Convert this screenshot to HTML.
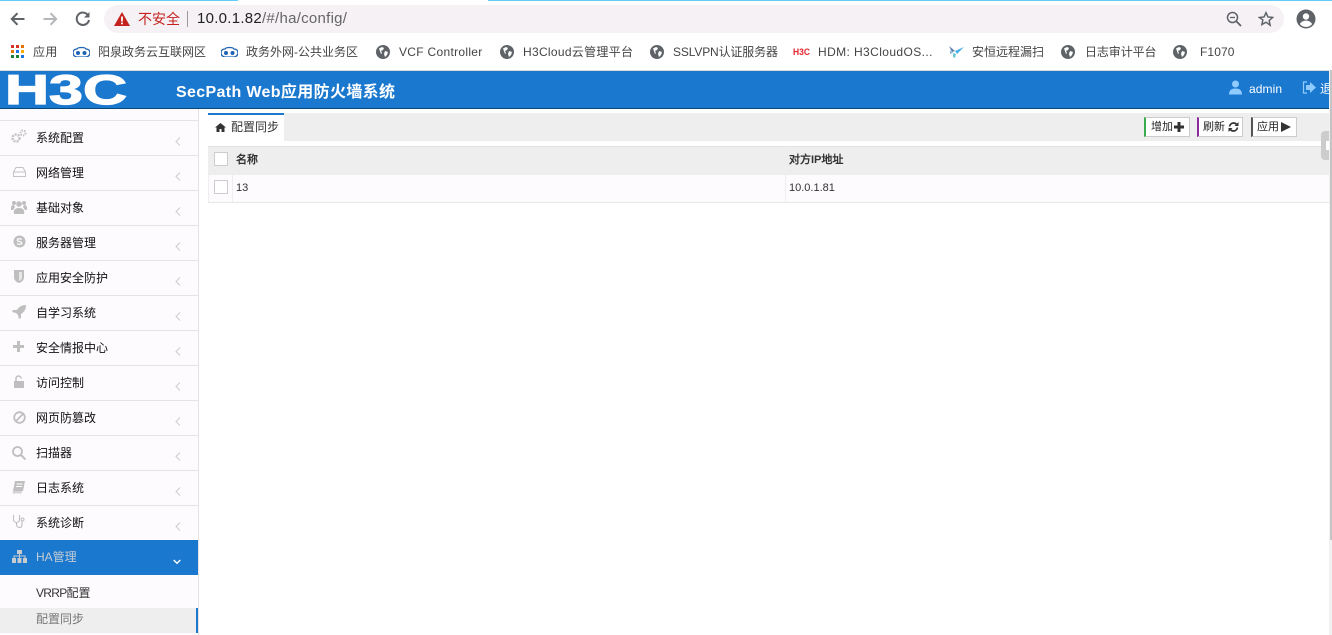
<!DOCTYPE html>
<html lang="zh-CN"><head><meta charset="utf-8"><title>配置同步</title>
<style>
html,body{margin:0;padding:0;width:1332px;height:635px;overflow:hidden;background:#fff}
body{position:relative;font-family:"Liberation Sans","WenQuanYi Zen Hei",sans-serif;font-size:12px;color:#222}
.a{position:absolute;white-space:nowrap}
.bm{position:absolute;top:44px;height:16px;line-height:16px;font-family:"Liberation Sans","Noto Sans CJK SC",sans-serif;font-size:12px;color:#444;white-space:nowrap}
.ic{position:absolute}
.mi{position:absolute;left:0;width:198px;height:34px;border-top:1px solid #e5e3e5;background:#fefbfe}
.mi span{position:absolute;left:36px;top:9px;line-height:16px;color:#111}
.mi svg.i{position:absolute;left:10px;top:8px}
.mi svg.c{position:absolute;left:175px;top:16px}
.btn{position:absolute;top:117px;height:18px;background:#fff;border:1px solid #ccc;line-height:18px;font-size:11px;color:#222;box-sizing:content-box}
.btn span{position:absolute;left:5px;top:0}
.btn svg{position:absolute;top:4px}
.cb{position:absolute;left:214px;width:12px;height:12px;background:#fff;border:1px solid #ccc}
</style></head><body>

<!-- top strip -->
<div class="a" style="left:0;top:0;width:238px;height:1px;background:#5fcdf5"></div>
<div class="a" style="left:488px;top:0;width:844px;height:1px;background:#5fcdf5"></div>

<!-- nav buttons -->
<svg class="ic" style="left:9px;top:10px" width="18" height="18" viewBox="0 0 18 18"><path d="M15.5 9H3M8.5 3.2L2.8 9l5.700 5.800" fill="none" stroke="#5f6368" stroke-width="2"/></svg>
<svg class="ic" style="left:41px;top:10px" width="18" height="18" viewBox="0 0 18 18"><path d="M2.5 9H15M9.5 3.2L15.2 9l-5.700 5.800" fill="none" stroke="#b5b7ba" stroke-width="2"/></svg>
<svg class="ic" style="left:74px;top:10px" width="18" height="18" viewBox="0 0 18 18"><path d="M14 5.200A6.200 6.200 0 1 0 15 10" fill="none" stroke="#5f6368" stroke-width="2"/><path d="M15.500 2v5.500H10z" fill="#5f6368"/></svg>

<!-- omnibox -->
<div class="a" style="left:104px;top:5px;width:1180px;height:28px;border-radius:14px;background:#f5f1f5"></div>
<svg class="ic" style="left:114px;top:12px" width="16" height="14" viewBox="0 0 16 14"><path d="M8 0l8 14H0z" fill="#c5221f"/><rect x="7.100" y="4.500" width="1.800" height="5" fill="#fff"/><rect x="7.100" y="10.500" width="1.800" height="1.800" fill="#fff"/></svg>
<div class="a" style="left:138px;top:11px;line-height:16px;font-size:14px;color:#c5221f;font-family:'Liberation Sans','Noto Sans CJK SC',sans-serif">不安全</div>
<div class="a" style="left:187px;top:11px;width:1px;height:16px;background:#9a9a9a"></div>
<div class="a" style="left:197px;top:10px;line-height:18px;font-size:15px;letter-spacing:.27px;color:#222;font-family:'Liberation Sans',sans-serif">10.0.1.82<span style="color:#666">/#/ha/config/</span></div>
<svg class="ic" style="left:1226px;top:11px" width="16" height="16" viewBox="0 0 16 16"><circle cx="6.500" cy="6.500" r="5" fill="none" stroke="#5f6368" stroke-width="1.500"/><path d="M10.300 10.300L15 15" stroke="#5f6368" stroke-width="1.800"/><path d="M4 6.500h5" stroke="#5f6368" stroke-width="1.300"/></svg>
<svg class="ic" style="left:1258px;top:11px" width="16" height="16" viewBox="0 0 24 24"><path d="M12 2.500l2.900 6.400 7 .8-5.200 4.700 1.500 6.900L12 16.800l-6.200 3.500 1.500-6.900L2.100 9.700l7-.8z" fill="none" stroke="#5f6368" stroke-width="2.200"/></svg>
<svg class="ic" style="left:1296px;top:9px" width="20" height="20" viewBox="0 0 20 20"><circle cx="10" cy="10" r="9.500" fill="#5f6368"/><circle cx="10" cy="7.500" r="3.200" fill="#fff"/><path d="M3.800 15c1.400-2.400 3.800-3.400 6.200-3.400s4.800 1 6.200 3.400c-1.500 1.900-3.700 3-6.200 3s-4.700-1.100-6.200-3z" fill="#fff"/></svg>

<!-- bookmarks -->
<svg class="ic" style="left:11px;top:45px" width="13" height="13" viewBox="0 0 13 13">
<rect x="0" y="0" width="3" height="3" fill="#d93025"/><rect x="5" y="0" width="3" height="3" fill="#d93025"/><rect x="10" y="0" width="3" height="3" fill="#e37400"/>
<rect x="0" y="5" width="3" height="3" fill="#e37400"/><rect x="5" y="5" width="3" height="3" fill="#1a73e8"/><rect x="10" y="5" width="3" height="3" fill="#f9ab00"/>
<rect x="0" y="10" width="3" height="3" fill="#188038"/><rect x="5" y="10" width="3" height="3" fill="#188038"/><rect x="10" y="10" width="3" height="3" fill="#1a73e8"/></svg>
<div class="bm" style="left:33px;letter-spacing:.4px">应用</div>
<svg class="ic" style="left:73px;top:46px" width="17" height="11" viewBox="0 0 17 11"><path d="M4 3c1-2 8-2 9 0 3 0 4 2 4 4s-2 4-4 4H4c-2 0-4-2-4-4s1-4 4-4z" fill="none" stroke="#1f63b5" stroke-width="1.300"/><circle cx="5" cy="7" r="2" fill="#1f63b5"/><circle cx="11.500" cy="7" r="2" fill="#1f63b5"/></svg>
<div class="bm" style="left:98px">阳泉政务云互联网区</div>
<svg class="ic" style="left:221px;top:46px" width="17" height="11" viewBox="0 0 17 11"><path d="M4 3c1-2 8-2 9 0 3 0 4 2 4 4s-2 4-4 4H4c-2 0-4-2-4-4s1-4 4-4z" fill="none" stroke="#1f63b5" stroke-width="1.300"/><circle cx="5" cy="7" r="2" fill="#1f63b5"/><circle cx="11.500" cy="7" r="2" fill="#1f63b5"/></svg>
<div class="bm" style="left:246px">政务外网-公共业务区</div>
<svg class="ic" style="left:376px;top:45px" width="14" height="14" viewBox="0 0 14 14"><circle cx="7" cy="7" r="7" fill="#5f6368"/><path d="M3 3.500l3-1.500 2 1-1 2-2 1 1 2-1 1zM9 6l3 1-1 3-2 2-1-3z" fill="#fff"/></svg>
<div class="bm" style="left:399px;letter-spacing:.3px">VCF Controller</div>
<svg class="ic" style="left:500px;top:45px" width="14" height="14" viewBox="0 0 14 14"><circle cx="7" cy="7" r="7" fill="#5f6368"/><path d="M3 3.500l3-1.500 2 1-1 2-2 1 1 2-1 1zM9 6l3 1-1 3-2 2-1-3z" fill="#fff"/></svg>
<div class="bm" style="left:523px;letter-spacing:.3px">H3Cloud云管理平台</div>
<svg class="ic" style="left:650px;top:45px" width="14" height="14" viewBox="0 0 14 14"><circle cx="7" cy="7" r="7" fill="#5f6368"/><path d="M3 3.500l3-1.500 2 1-1 2-2 1 1 2-1 1zM9 6l3 1-1 3-2 2-1-3z" fill="#fff"/></svg>
<div class="bm" style="left:673px;letter-spacing:-.15px">SSLVPN认证服务器</div>
<svg class="ic" style="left:793px;top:46px" width="18" height="11"><text x="0" y="9" textLength="17" lengthAdjust="spacingAndGlyphs" font-family="Liberation Sans" font-weight="bold" font-size="9" fill="#e3242b">H3C</text></svg>
<div class="bm" style="left:818px;letter-spacing:.4px">HDM: H3CloudOS...</div>
<svg class="ic" style="left:948px;top:45px" width="16" height="15" viewBox="0 0 16 15"><path d="M1 1l6 5-3 1z" fill="#5a7ea8"/><path d="M16 2L7 6l2 3z" fill="#4aaee8"/><path d="M5 8l3 1-1 4-2-1z" fill="#6cc6d8"/><path d="M2 5l3 3-3 1z" fill="#8fb8d8"/></svg>
<div class="bm" style="left:972px">安恒远程漏扫</div>
<svg class="ic" style="left:1061px;top:45px" width="14" height="14" viewBox="0 0 14 14"><circle cx="7" cy="7" r="7" fill="#5f6368"/><path d="M3 3.500l3-1.500 2 1-1 2-2 1 1 2-1 1zM9 6l3 1-1 3-2 2-1-3z" fill="#fff"/></svg>
<div class="bm" style="left:1085px;letter-spacing:-.1px">日志审计平台</div>
<svg class="ic" style="left:1173px;top:45px" width="14" height="14" viewBox="0 0 14 14"><circle cx="7" cy="7" r="7" fill="#5f6368"/><path d="M3 3.500l3-1.500 2 1-1 2-2 1 1 2-1 1zM9 6l3 1-1 3-2 2-1-3z" fill="#fff"/></svg>
<div class="bm" style="left:1200px;letter-spacing:.1px">F1070</div>

<!-- header -->
<div class="a" style="left:0;top:70px;width:1329px;height:1px;background:#d9d9d9"></div>
<div class="a" style="left:0;top:71px;width:1329px;height:37px;background:#1a78cf;overflow:hidden">
  <svg style="position:absolute;left:0;top:0" width="140" height="37"><text x="5" y="33" textLength="122" lengthAdjust="spacingAndGlyphs" font-family="Liberation Sans" font-weight="bold" font-size="42" fill="#fff" stroke="#fff" stroke-width="1.200">H3C</text></svg>
  <div class="a" style="left:176px;top:11px;line-height:20px;font-size:16px;font-weight:bold;color:#fff;font-family:'Liberation Sans','Noto Sans CJK SC',sans-serif;letter-spacing:.35px;margin-top:1px">SecPath Web应用防火墙系统</div>
  <svg class="ic" style="left:1229px;top:9px" width="13" height="15" viewBox="0 0 13 15"><circle cx="6.500" cy="4" r="3.500" fill="#8fcbff"/><path d="M0 14.500c0-4 2-6 6.500-6s6.500 2 6.500 6z" fill="#8fcbff"/></svg>
  <div class="a" style="left:1249px;top:10px;line-height:16px;color:#fff;font-size:12px;letter-spacing:.1px">admin</div>
  <svg class="ic" style="left:1302px;top:10px" width="14" height="13" viewBox="0 0 14 13"><path d="M5 1H1.500v11H5" fill="none" stroke="#8fcbff" stroke-width="1.200"/><path d="M4 4h4V1l6 5.500L8 12V9H4z" fill="#8fcbff"/></svg>
  <div class="a" style="left:1320px;top:10px;line-height:16px;color:#fff;font-family:'Liberation Sans','Noto Sans CJK SC',sans-serif">退出</div>
</div>
<div class="a" style="left:0;top:108px;width:1329px;height:1px;background:#0a4676"></div>

<!-- sidebar -->
<div class="a" style="left:0;top:109px;width:198px;height:526px;background:#fefbfe"></div>
<div class="a" style="left:198px;top:109px;width:1px;height:526px;background:#e5e3e5"></div>

<div class="mi" style="top:120px"><svg class="i" width="17" height="16" viewBox="0 0 17 16"><circle cx="6" cy="9" r="3.500" fill="none" stroke="#c4c4c4" stroke-width="2.500" stroke-dasharray="2 1"/><circle cx="13" cy="4" r="2.500" fill="none" stroke="#c4c4c4" stroke-width="2" stroke-dasharray="1.500 1"/></svg><span>系统配置</span><svg class="c" width="6" height="9" viewBox="0 0 6 9"><path d="M5 .5L1 4.500 5 8.500" fill="none" stroke="#ccc" stroke-width="1"/></svg></div>
<div class="mi" style="top:155px"><svg class="i" style="left:13px;top:11px" width="13" height="10" viewBox="0 0 13 10"><path d="M3 .5h7l2.500 4.500v4.500H.5V5zM.5 5h12" fill="none" stroke="#c4c4c4" stroke-width="1"/></svg><span>网络管理</span><svg class="c" width="6" height="9" viewBox="0 0 6 9"><path d="M5 .5L1 4.500 5 8.500" fill="none" stroke="#ccc" stroke-width="1"/></svg></div>
<div class="mi" style="top:190px"><svg class="i" style="left:11px;top:9px" width="16" height="14" viewBox="0 0 16 14"><circle cx="3" cy="3" r="2" fill="#bfbfbf"/><circle cx="13" cy="3" r="2" fill="#bfbfbf"/><circle cx="8" cy="4" r="2.800" fill="#bfbfbf"/><path d="M3 14c-1-4 1-6 5-6s6 2 5 6zM0 8c0-2 1-3 3-3l1 2-2 3H0zM16 8c0-2-1-3-3-3l-1 2 2 3h2z" fill="#bfbfbf"/></svg><span>基础对象</span><svg class="c" width="6" height="9" viewBox="0 0 6 9"><path d="M5 .5L1 4.500 5 8.500" fill="none" stroke="#ccc" stroke-width="1"/></svg></div>
<div class="mi" style="top:225px"><svg class="i" style="left:13px;top:9px" width="13" height="13" viewBox="0 0 13 13"><circle cx="6.500" cy="6.500" r="6" fill="#bfbfbf"/><path d="M8.800 4.500c-1-1-4.500-1.200-4.500.7 0 1.800 4.500 1 4.500 2.800 0 1.800-3.500 1.500-4.700.5" fill="none" stroke="#fff" stroke-width="1.200"/></svg><span>服务器管理</span><svg class="c" width="6" height="9" viewBox="0 0 6 9"><path d="M5 .5L1 4.500 5 8.500" fill="none" stroke="#ccc" stroke-width="1"/></svg></div>
<div class="mi" style="top:260px"><svg class="i" style="left:14px;top:9px" width="10" height="13" viewBox="0 0 10 13"><path d="M0 0h10v7c0 3-2 5-5 6-3-1-5-3-5-6z" fill="#bfbfbf"/><path d="M5 2h3v5c0 2-1 3-3 4z" fill="#e8e6e8"/></svg><span>应用安全防护</span><svg class="c" width="6" height="9" viewBox="0 0 6 9"><path d="M5 .5L1 4.500 5 8.500" fill="none" stroke="#ccc" stroke-width="1"/></svg></div>
<div class="mi" style="top:295px"><svg class="i" style="left:12px;top:9px" width="14" height="14" viewBox="0 0 14 14"><path d="M14 0c-4 0-7 1.500-9 5H1L0 7l4 1 2 2 1 4 2-1v-4c3.500-2 5-5 5-9z" fill="#bfbfbf"/></svg><span>自学习系统</span><svg class="c" width="6" height="9" viewBox="0 0 6 9"><path d="M5 .5L1 4.500 5 8.500" fill="none" stroke="#ccc" stroke-width="1"/></svg></div>
<div class="mi" style="top:330px"><svg class="i" style="left:13px;top:10px" width="11" height="11" viewBox="0 0 11 11"><path d="M4 0h3v4h4v3H7v4H4V7H0V4h4z" fill="#bfbfbf"/></svg><span>安全情报中心</span><svg class="c" width="6" height="9" viewBox="0 0 6 9"><path d="M5 .5L1 4.500 5 8.500" fill="none" stroke="#ccc" stroke-width="1"/></svg></div>
<div class="mi" style="top:365px"><svg class="i" style="left:14px;top:9px" width="10" height="13" viewBox="0 0 10 13"><path d="M2 6V3.500a2.500 2.500 0 0 1 5 0" fill="none" stroke="#bfbfbf" stroke-width="1.500"/><rect x="0" y="6" width="10" height="7" fill="#bfbfbf"/></svg><span>访问控制</span><svg class="c" width="6" height="9" viewBox="0 0 6 9"><path d="M5 .5L1 4.500 5 8.500" fill="none" stroke="#ccc" stroke-width="1"/></svg></div>
<div class="mi" style="top:400px"><svg class="i" style="left:13px;top:10px" width="13" height="13" viewBox="0 0 13 13"><circle cx="6.500" cy="6.500" r="5.300" fill="none" stroke="#bfbfbf" stroke-width="1.800"/><path d="M3 10L10 3" stroke="#bfbfbf" stroke-width="1.800"/></svg><span>网页防篡改</span><svg class="c" width="6" height="9" viewBox="0 0 6 9"><path d="M5 .5L1 4.500 5 8.500" fill="none" stroke="#ccc" stroke-width="1"/></svg></div>
<div class="mi" style="top:435px"><svg class="i" style="left:12px;top:10px" width="14" height="14" viewBox="0 0 14 14"><circle cx="5.500" cy="5.500" r="4.500" fill="none" stroke="#bfbfbf" stroke-width="1.800"/><path d="M9 9l4.500 4.500" stroke="#bfbfbf" stroke-width="2"/></svg><span>扫描器</span><svg class="c" width="6" height="9" viewBox="0 0 6 9"><path d="M5 .5L1 4.500 5 8.500" fill="none" stroke="#ccc" stroke-width="1"/></svg></div>
<div class="mi" style="top:470px"><svg class="i" style="left:12px;top:10px" width="13" height="13" viewBox="0 0 13 13"><path d="M3 0h10l-2 10H1z" fill="#bfbfbf"/><path d="M1 10h9L9.500 12.500H.5z" fill="#d5d3d5"/><path d="M4.500 3h6M4 5.500h6" stroke="#fff"/></svg><span>日志系统</span><svg class="c" width="6" height="9" viewBox="0 0 6 9"><path d="M5 .5L1 4.500 5 8.500" fill="none" stroke="#ccc" stroke-width="1"/></svg></div>
<div class="mi" style="top:505px"><svg class="i" style="left:13px;top:9px" width="12" height="13" viewBox="0 0 12 13"><path d="M1 .5H.5v4c0 2 1.500 3 3 3s3-1 3-3v-4H6M3.500 7.500v2c0 2 1.500 3 3 3s2.500-1 2.500-3V6" fill="none" stroke="#bfbfbf" stroke-width="1.100"/><circle cx="9.500" cy="4.500" r="1.500" fill="none" stroke="#bfbfbf"/></svg><span>系统诊断</span><svg class="c" width="6" height="9" viewBox="0 0 6 9"><path d="M5 .5L1 4.500 5 8.500" fill="none" stroke="#ccc" stroke-width="1"/></svg></div>

<div class="a" style="left:0;top:540px;width:198px;height:35px;background:#1a78cf"></div>
<svg class="ic" style="left:12px;top:550px" width="15" height="13" viewBox="0 0 15 13"><rect x="5" y="0" width="5" height="4" fill="#c8ccd0"/><rect x="0" y="8" width="4" height="5" fill="#c8ccd0"/><rect x="5.500" y="8" width="4" height="5" fill="#c8ccd0"/><rect x="11" y="8" width="4" height="5" fill="#c8ccd0"/><path d="M2 8V6h11v2M7.500 4v4" fill="none" stroke="#c8ccd0"/></svg>
<div class="a" style="left:36px;top:549px;line-height:16px;color:#c5ccd3">HA管理</div>
<svg class="ic" style="left:173px;top:559px" width="8" height="6" viewBox="0 0 8 6"><path d="M.7 1L4 4.300 7.300 1" fill="none" stroke="#fff" stroke-width="1.400"/></svg>

<div class="a" style="left:36px;top:585px;line-height:16px;color:#333"><span style="letter-spacing:-.7px">VRRP</span>配置</div>
<div class="a" style="left:0;top:608px;width:196px;height:25px;background:#eee"></div>
<div class="a" style="left:196px;top:608px;width:2px;height:25px;background:#1a78cf"></div>
<div class="a" style="left:36px;top:611px;line-height:16px;color:#777">配置同步</div>

<!-- tabs bar -->
<div class="a" style="left:208px;top:113px;width:1121px;height:28px;background:#eee"></div>
<div class="a" style="left:208px;top:113px;width:76px;height:26px;background:#fff;border-top:2px solid #1a78cf"></div>
<svg class="ic" style="left:215px;top:123px" width="11" height="9" viewBox="0 0 11 9"><path d="M5.500 0L11 4.500H9.500V9H6.500V6h-2v3H1.500V4.500H0z" fill="#333"/></svg>
<div class="a" style="left:231px;top:119px;line-height:16px;color:#333">配置同步</div>

<div class="btn" style="left:1144px;width:43px;border-left:2px solid #3aab4d"><span>增加</span><svg style="left:28px" width="10" height="10" viewBox="0 0 10 10"><path d="M3.500 0h3v3.500H10v3H6.500V10h-3V6.500H0v-3h3.500z" fill="#333"/></svg></div>
<div class="btn" style="left:1197px;width:43px;border-left:2px solid #8b2a9e"><span style="left:4px">刷新</span><svg style="left:29px" width="11" height="10" viewBox="0 0 11 10"><path d="M1.500 4.500C2 2 4 1 5.500 1c1.300 0 2.300.5 3 1.300M9.500 5.500C9 8 7 9 5.500 9c-1.300 0-2.300-.5-3-1.300" fill="none" stroke="#333" stroke-width="1.700"/><path d="M10.500 0v4h-4zM.5 10V6h4z" fill="#333"/></svg></div>
<div class="btn" style="left:1251px;width:43px;border-left:2px solid #555"><span style="left:4px">应用</span><svg style="left:28px" width="10" height="10" viewBox="0 0 10 10"><path d="M0 0l10 5-10 5z" fill="#333"/></svg></div>

<!-- table -->
<div class="a" style="left:208px;top:146px;width:1121px;height:1px;background:#e0e0e0"></div>
<div class="a" style="left:208px;top:147px;width:1121px;height:28px;background:#eee"></div>
<div class="a" style="left:208px;top:175px;width:1121px;height:27px;background:#fefbfe"></div>
<div class="a" style="left:208px;top:202px;width:1121px;height:1px;background:#e8e6e8"></div>
<div class="a" style="left:208px;top:175px;width:1px;height:27px;background:#eee"></div>
<div class="a" style="left:232px;top:147px;width:1px;height:55px;background:#eee"></div>
<div class="a" style="left:785px;top:146px;width:1px;height:56px;background:#eee"></div>
<div class="cb" style="top:152px"></div>
<div class="cb" style="top:180px"></div>
<div class="a" style="left:236px;top:152px;line-height:16px;font-size:11px;font-weight:bold;color:#333">名称</div>
<div class="a" style="left:789px;top:152px;line-height:16px;font-size:11px;font-weight:bold;color:#333">对方IP地址</div>
<div class="a" style="left:236px;top:180px;line-height:16px;font-size:11px;color:#333">13</div>
<div class="a" style="left:789px;top:180px;line-height:16px;font-size:11px;color:#333">10.0.1.81</div>

<!-- collapse handle -->
<div class="a" style="left:1321px;top:131px;width:8px;height:29px;background:#ccc;border-radius:4px 0 0 4px"></div>
<div class="a" style="left:1326px;top:141px;width:3px;height:9px;background:#fff"></div>

<!-- right scroll strip -->
<div class="a" style="left:1329px;top:70px;width:3px;height:565px;background:#f1f1f1"></div>
<div class="a" style="left:1330px;top:70px;width:2px;height:470px;background:#c4c4c4"></div>
</body></html>
